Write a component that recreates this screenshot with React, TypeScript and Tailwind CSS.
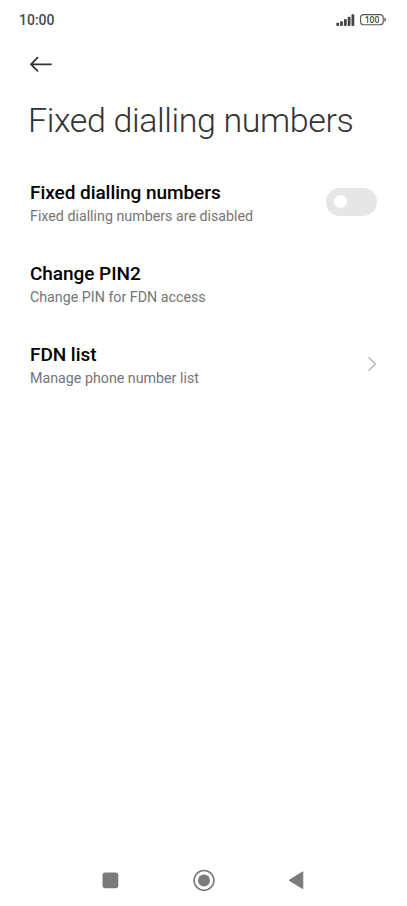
import React from 'react'

type Item = {
  title: string
  summary: string
  control?: 'switch' | 'link'
}

const items: Item[] = [
  { title: 'Fixed dialling numbers', summary: 'Fixed dialling numbers are disabled', control: 'switch' },
  { title: 'Change PIN2', summary: 'Change PIN for FDN access' },
  { title: 'FDN list', summary: 'Manage phone number list', control: 'link' },
]

function StatusBar() {
  return (
    <div className="flex h-10 items-center justify-between pl-[19px] pr-[21px]">
      <span className="text-[14px] font-medium leading-5 text-[#4a4a4a]">10:00</span>
      <div className="flex items-center gap-[5px]">
        <svg width="19" height="12" viewBox="0 0 19 12" fill="#444">
          <rect x="0.3" y="8.7" width="2.8" height="3.3" rx="0.9" />
          <rect x="4.1" y="7.2" width="2.8" height="4.8" rx="0.9" />
          <rect x="7.9" y="5" width="2.8" height="7" rx="0.9" />
          <rect x="11.7" y="2.8" width="2.8" height="9.2" rx="0.9" />
          <rect x="15.5" y="0.3" width="2.8" height="11.7" rx="0.9" />
        </svg>
        <svg width="26" height="12" viewBox="0 0 26 12">
          <rect x="0.6" y="0.6" width="22.6" height="10.2" rx="3" fill="none" stroke="#555" strokeWidth="1.1" />
          <rect x="24.3" y="4" width="1.4" height="3.6" rx="0.6" fill="#555" />
          <text x="12" y="8.8" textAnchor="middle" fontSize="8.6" fontWeight="500" fill="#444">100</text>
        </svg>
      </div>
    </div>
  )
}

function Switch() {
  return (
    <div className="flex h-7 w-[51px] items-center rounded-full bg-[#e6e6e6] pl-[8px]">
      <div className="size-[13px] rounded-full bg-white" />
    </div>
  )
}

export default function App() {
  return (
    <div className="flex h-[906px] w-[407px] flex-col bg-white font-['Roboto',sans-serif]">
      <StatusBar />
      <div className="h-[48px] pl-[29px] pt-[15px]">
        <svg width="24" height="18" viewBox="0 0 24 18" fill="none" stroke="#333" strokeWidth="1.8" strokeLinecap="round" strokeLinejoin="round">
          <path d="M8.5 2.7L2 9.3L8.5 15.9M2 9.3H22" />
        </svg>
      </div>
      <h1 className="mt-[11px] h-[42px] whitespace-nowrap pl-[28px] text-[34px] font-light leading-[42px] tracking-[-0.39px] text-[#333]">Fixed dialling numbers</h1>
      <div className="mt-[20px]">
        {items.map(item => (
          <div key={item.title} className="flex h-[81px] items-center justify-between pl-[30px] pr-[30px]">
            <div className="pt-[3px]">
              <div className="text-[19px] font-medium leading-6 tracking-[-0.05px] text-black">{item.title}</div>
              <div className="mt-px text-[14.25px] leading-5 text-[#757575]">{item.summary}</div>
            </div>
            {item.control === 'switch' && <Switch />}
            {item.control === 'link' && (
              <svg width="10" height="16" viewBox="0 0 10 16" fill="none" stroke="#b0b0b0" strokeWidth="1.3">
                <path d="M1.5 1.5L8.5 8L1.5 14.5" />
              </svg>
            )}
          </div>
        ))}
      </div>
      <div className="mt-auto flex h-[52px] items-center justify-between pl-[102px] pr-[103px]">
        <svg width="17" height="17" viewBox="0 0 17 17">
          <rect x="0.5" y="0.5" width="15.8" height="15.8" rx="2.8" fill="#7b7b7b" />
        </svg>
        <svg width="22" height="22" viewBox="0 0 22 22">
          <circle cx="11" cy="11.4" r="9.9" fill="none" stroke="#7b7b7b" strokeWidth="1.6" />
          <circle cx="11" cy="11.4" r="6" fill="#7b7b7b" />
        </svg>
        <svg width="16" height="20" viewBox="0 0 16 20" fill="#7b7b7b">
          <path d="M1.2 10.3L14.8 1.8V18.6Z" stroke="#7b7b7b" strokeLinejoin="round" />
        </svg>
      </div>
    </div>
  )
}
